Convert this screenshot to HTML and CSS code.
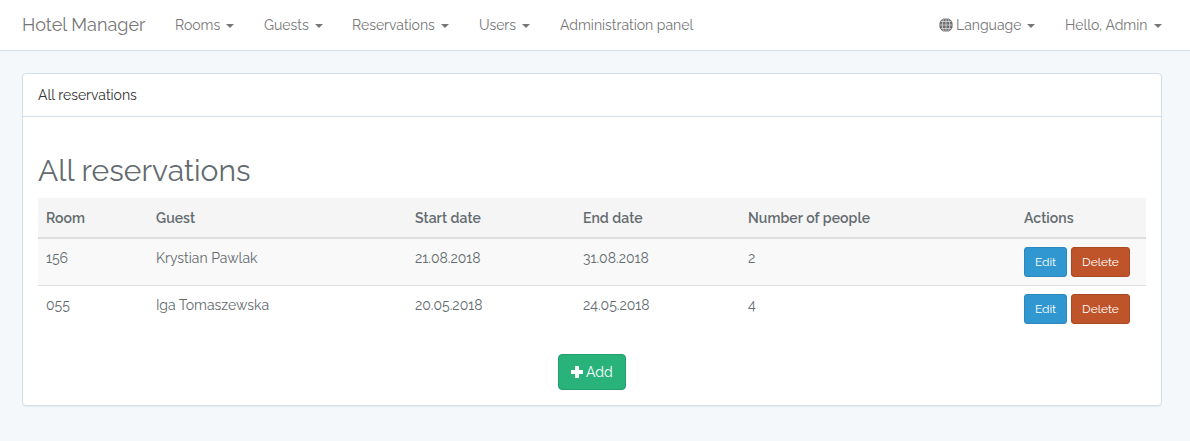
FILE: index.html
```html
<!DOCTYPE html>
<html lang="en">
<head>
<meta charset="utf-8">
<title>Hotel Manager</title>
<link rel="stylesheet" href="styles.css">
</head>
<body>
<nav class="navbar">
  <a class="brand"><span>Hotel Manager</span></a>
  <a class="nav-link rooms"><span>Rooms</span><i class="caret"></i></a>
  <a class="nav-link guests"><span>Guests</span><i class="caret"></i></a>
  <a class="nav-link reservations"><span>Reservations</span><i class="caret"></i></a>
  <a class="nav-link users"><span>Users</span><i class="caret"></i></a>
  <a class="nav-link admin"><span>Administration panel</span></a>
  <a class="nav-link language">
    <svg class="globe" viewBox="0 0 14 14"><circle cx="7" cy="7" r="6.9" fill="#707070"/><g fill="none" stroke="#fff" stroke-width=".55"><path d="M7 0v14M0 7h14M1.8 3.5h10.400M1.8 10.5h10.400"/><ellipse cx="7" cy="7" rx="3.7" ry="7.2"/></g></svg>
    <span>Language</span><i class="caret"></i></a>
  <a class="nav-link hello"><span>Hello, Admin</span><i class="caret"></i></a>
</nav>
<main class="panel">
  <header class="panel-heading"><span>All reservations</span></header>
  <section class="panel-body">
    <h1 class="title"><span>All reservations</span></h1>
    <table class="table">
      <colgroup><col class="c-room"><col class="c-guest"><col class="c-start"><col class="c-end"><col class="c-people"><col class="c-actions"></colgroup>
      <thead>
        <tr><th>Room</th><th>Guest</th><th>Start date</th><th>End date</th><th>Number of people</th><th>Actions</th></tr>
      </thead>
      <tbody>
        <tr class="striped"><td>156</td><td>Krystian Pawlak</td><td>21.08.2018</td><td>31.08.2018</td><td>2</td>
          <td><div class="actions"><a class="btn edit">Edit</a><a class="btn delete">Delete</a></div></td></tr>
        <tr><td>055</td><td>Iga Tomaszewska</td><td>20.05.2018</td><td>24.05.2018</td><td>4</td>
          <td><div class="actions"><a class="btn edit">Edit</a><a class="btn delete">Delete</a></div></td></tr>
      </tbody>
    </table>
    <a class="btn add"><svg class="plus" viewBox="0 0 12 12"><path d="M4.5 0h3q.5 0 .5.5V4h3.500q.5 0 .5.5v3q0 .5-.5.5H8v3.500q0 .5-.5.5h-3q-.5 0-.5-.5V8H.5Q0 8 0 7.500v-3Q0 4 .5 4H4V.5q0-.5.5-.5z" fill="#fff"/></svg><span>Add</span></a>
  </section>
</main>
</body>
</html>
```
FILE: styles.css
```css
* { box-sizing: border-box; }
body {
  margin: 0;
  min-height: 441px;
  background: #f5f8fa;
  color: #636b6f;
  font: 14px/22px Raleway, Lato, sans-serif;
  font-kerning: normal;
}
.navbar {
  display: flex;
  height: 51px;
  padding: 0 28px 0 22px;
  background: #fff;
  border-bottom: 1px solid #d3e0e9;
  color: #777;
}
.brand { width: 153px; font-size: 18px; line-height: 50px; white-space: nowrap; letter-spacing: .04px; }
.nav-link { display: flex; align-items: center; height: 50px; white-space: nowrap; }
.rooms { width: 89px; }
.guests { width: 88px; }
.reservations { width: 127px; }
.users { width: 81px; }
.language { width: 126px; margin-left: auto; }
.hello { width: 97px; justify-content: space-between; }
.globe { width: 14px; height: 14px; margin-right: 3px; }
.caret {
  margin: 2px 0 0 6px;
  border-top: 4px solid #777;
  border-left: 4px solid transparent;
  border-right: 4px solid transparent;
}
.panel {
  width: 1140px;
  height: 333px;
  margin: 22px 0 0 22px;
  background: #fff;
  border: 1px solid #d3e0e9;
  border-radius: 4px;
  box-shadow: 0 1px 1px rgba(0, 0, 0, .05);
}
.panel-heading {
  height: 43px;
  padding: 10px 15px;
  border-bottom: 1px solid #d3e0e9;
  color: #333;
}
.panel-body { display: flex; flex-direction: column; padding: 37px 15px 15px; }
.title { margin: 0 0 11px; font-size: 30px; line-height: 33px; font-weight: 400; letter-spacing: .04px; }
.table { width: 100%; table-layout: fixed; border-collapse: separate; border-spacing: 0; }
.c-room { width: 110px; }
.c-guest { width: 259px; }
.c-start { width: 168px; }
.c-end { width: 165px; }
.c-people { width: 276px; }
th { height: 41px; padding: 8px; background: #f5f5f5; border-bottom: 2px solid #ddd; text-align: left; font-weight: 600; letter-spacing: .06px; }
td { height: 47px; padding: 8px; vertical-align: top; }
.striped td { background: #f9f9f9; border-bottom: 1px solid #ddd; }
.actions { display: flex; gap: 4px; }
.btn { display: flex; align-items: center; justify-content: center; border: 1px solid; border-radius: 3px; color: #fff; height: 30px; font-size: 12px; }
.edit { width: 43px; background: #3097d1; border-color: #2a88bd; }
.delete { width: 59px; background: #bf5329; border-color: #aa4a24; }
.add { align-self: center; justify-content: flex-start; width: 68px; height: 36px; margin-top: 21px; padding-left: 12px; gap: 3px; background: #2ab27b; border-color: #259d6d; border-radius: 4px; font-size: 14px; }
.plus { width: 12px; height: 12px; }
```
